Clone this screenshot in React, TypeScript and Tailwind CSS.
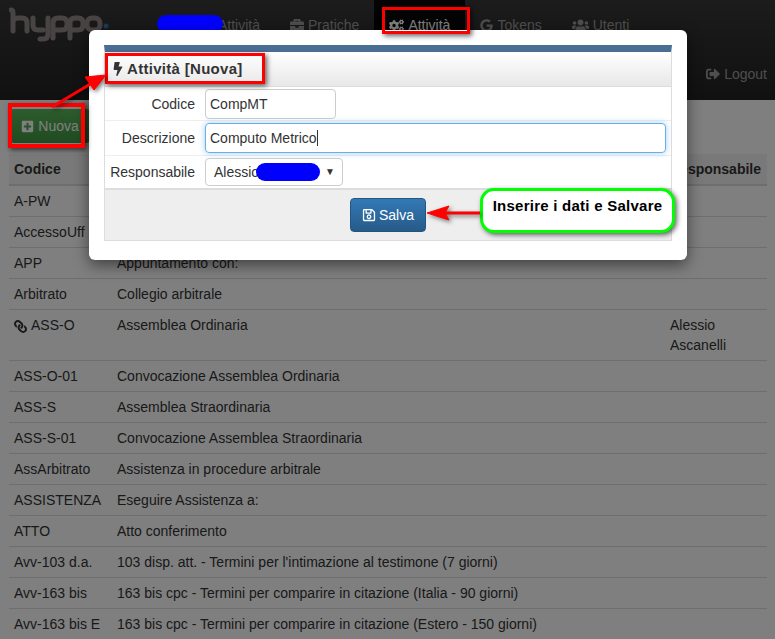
import React from 'react';
import { FaBolt, FaBriefcase, FaCogs, FaGoogle, FaLink, FaPlusSquare, FaRegSave, FaSignOutAlt, FaUsers } from 'react-icons/fa';

const ROWS: { code: string; desc?: string; owner?: string; linked?: boolean }[] = [
  { code: 'A-PW' },
  { code: 'AccessoUff' },
  { code: 'APP', desc: 'Appuntamento con:' },
  { code: 'Arbitrato', desc: 'Collegio arbitrale' },
  { code: 'ASS-O', desc: 'Assemblea Ordinaria', owner: 'Alessio Ascanelli', linked: true },
  { code: 'ASS-O-01', desc: 'Convocazione Assemblea Ordinaria' },
  { code: 'ASS-S', desc: 'Assemblea Straordinaria' },
  { code: 'ASS-S-01', desc: 'Convocazione Assemblea Straordinaria' },
  { code: 'AssArbitrato', desc: 'Assistenza in procedure arbitrale' },
  { code: 'ASSISTENZA', desc: 'Eseguire Assistenza a:' },
  { code: 'ATTO', desc: 'Atto conferimento' },
  { code: 'Avv-103 d.a.', desc: "103 disp. att. - Termini per l'intimazione al testimone (7 giorni)" },
  { code: 'Avv-163 bis', desc: '163 bis cpc - Termini per comparire in citazione (Italia - 90 giorni)' },
  { code: 'Avv-163 bis E', desc: '163 bis cpc - Termini per comparire in citazione (Estero - 150 giorni)' },
];

const NAV = [
  { label: 'Attività', icon: <FaBolt size={13} />, active: false },
  { label: 'Pratiche', icon: <FaBriefcase size={14} />, active: false },
  { label: 'Attività', icon: <FaCogs size={15} />, active: true },
  { label: 'Tokens', icon: <FaGoogle size={13} />, active: false },
  { label: 'Utenti', icon: <FaUsers size={17} />, active: false },
];

const App: React.FC = () => {
  return (
    <div className="relative h-[639px] w-[775px] overflow-hidden bg-white font-['Liberation_Sans',Arial,sans-serif] text-sm text-[#333]">
      <nav className="h-[100px] bg-gradient-to-b from-[#383838] to-[#222]">
        <div className="flex pl-[186px]">
          {NAV.map((item, i) => (
            <div key={i} className={`flex h-[50px] items-center gap-1 px-[15px] text-[#9d9d9d] ${item.active ? 'bg-[#080808] text-white' : ''}`}>
              {item.icon}
              <span>{item.label}</span>
            </div>
          ))}
        </div>
        <div className="flex h-[48px] items-center justify-end gap-1 pr-2 text-[#9d9d9d]">
          <FaSignOutAlt size={14} />
          <span>Logout</span>
        </div>
      </nav>

      <div className="px-[9px]">
        <div className="pb-[11px] pl-[1px] pt-[9px]">
          <button className="flex h-[34px] w-[80px] items-center justify-center gap-1 rounded bg-gradient-to-b from-[#5cb85c] to-[#419641] text-white">
            <FaPlusSquare size={13} />
            Nuova
          </button>
        </div>
        <table className="w-[758px] table-fixed border-collapse">
          <thead>
            <tr className="h-[31px] border-b-2 border-[#ddd] bg-[#f2f2f2] text-left">
              <th className="w-[103px] p-[5px]">Codice</th>
              <th className="w-[553px] p-[5px]"></th>
              <th className="p-[5px] whitespace-nowrap">Responsabile</th>
            </tr>
          </thead>
          <tbody>
            {ROWS.map(row => (
              <tr key={row.code} className="h-[31px] border-b border-[#ddd] align-top">
                <td className="p-[5px] whitespace-nowrap">
                  {row.linked && <FaLink size={13} className="mr-1 inline -scale-x-100" />}
                  {row.code}
                </td>
                <td className="p-[5px] whitespace-nowrap">{row.desc}</td>
                <td className="p-[5px]">{row.owner}</td>
              </tr>
            ))}
          </tbody>
        </table>
      </div>

      {/* backdrop */}
      <div className="absolute inset-0 bg-black/50" />

      {/* logo */}
      <svg className="absolute left-[9px] top-[7px]" width="104" height="36" viewBox="0 0 104 36" fill="none" stroke="#484444" strokeWidth="5" strokeLinecap="round">
        <path d="M2 3q2 0 2 3v18M4 15q0-4 5-4h4q5 0 5 5v8" />
        <path d="M24 11v7q0 5 5 5h5M39 11v16q0 5-5 5h-3" />
        <path d="M44 31V16q0-5 5-5h4q5 0 5 5v2q0 5-5 5h-6" />
        <path d="M61 31V16q0-5 5-5h3q5 0 5 5v2q0 5-5 5h-5" />
        <rect x="78" y="11" width="13" height="12" rx="5" />
        <circle cx="97" cy="19" r="2.5" fill="#1f3a5a" stroke="none" />
      </svg>

      {/* scribble over the first menu item */}
      <div className="absolute left-[157px] top-[15px] h-[18px] w-[66px] rounded-full bg-[#0000ff]" />

      {/* modal */}
      <div className="absolute left-[89px] top-[30px] h-[230px] w-[598px] rounded-md bg-white p-[15px] shadow-[0_5px_15px_rgba(0,0,0,0.5)]">
        <div className="border-x border-b border-[#ddd] border-t-[7px] border-t-[#4a6d94]">
          <div className="flex h-[34px] items-center gap-[2px] bg-gradient-to-b from-white to-[#e8e8e8] pl-[6px] text-[15px] font-bold tracking-[0.3px]">
            <FaBolt size={14} />
            Attività [Nuova]
          </div>
          <div className="flex h-[34px] items-center gap-[10px] border-t border-[#ddd]">
            <label className="w-[90px] text-right">Codice</label>
            <div className="flex h-[30px] w-[131px] items-center rounded border border-[#ccc] px-[4px]">CompMT</div>
          </div>
          <div className="flex h-[35px] items-center gap-[10px] border-t border-[#eee]">
            <label className="w-[90px] text-right">Descrizione</label>
            <div className="flex h-[30px] w-[461px] items-center rounded border border-[#66afe9] px-[4px] shadow-[0_0_6px_rgba(102,175,233,0.6)]">
              Computo Metrico<span className="h-4 w-px bg-[#333]" />
            </div>
          </div>
          <div className="flex h-[33px] items-center gap-[10px] border-t border-[#eee]">
            <label className="w-[90px] text-right">Responsabile</label>
            <div className="relative flex h-[28px] w-[138px] items-center justify-between rounded border border-[#ccc] pl-2 pr-[7px]">
              <span>Alessio</span>
              <span className="text-[10px]">▼</span>
              <div className="absolute left-[50px] top-[4px] h-[18px] w-[64px] rounded-full bg-[#0000ff]" />
            </div>
          </div>
          <div className="flex h-[52px] items-center border-t-2 border-[#ddd] bg-[#eee] pl-[245px]">
            <button className="flex h-[34px] w-[76px] items-center justify-center gap-[3px] rounded border border-[#245580] bg-gradient-to-b from-[#337ab7] to-[#265a88] text-white">
              <FaRegSave size={14} />
              Salva
            </button>
          </div>
        </div>
      </div>

      {/* annotations */}
      <div className="absolute left-[8px] top-[103px] h-[45px] w-[77px] border-4 border-[#ff0000] shadow-[2px_2px_5px_rgba(0,0,0,0.6)]" />
      <div className="absolute left-[105px] top-[53px] h-[31px] w-[160px] border-[3px] border-[#ff0000] shadow-[2px_2px_5px_rgba(0,0,0,0.6)]" />
      <div className="absolute left-[382px] top-[7px] h-[27px] w-[88px] border-[3px] border-[#ff0000] shadow-[2px_2px_5px_rgba(0,0,0,0.6)]" />
      <div className="absolute left-[480px] top-[188px] flex h-[45px] w-[195px] justify-center rounded-[14px] border-[3px] border-[#00ff00] bg-white pt-[4px] text-[15px] font-bold tracking-[0.25px] text-black shadow-[2px_2px_5px_rgba(0,0,0,0.6)]">
        Inserire i dati e Salvare
      </div>
      <svg className="absolute left-0 top-0 drop-shadow-[2px_2px_2px_rgba(0,0,0,0.5)]" width="775" height="639" fill="#ff0000" stroke="#ff0000">
        <path d="M52 107L92 83" strokeWidth="3" />
        <path d="M106 75L85 77L94 90Z" />
        <path d="M480 213H440" strokeWidth="3" />
        <path d="M427 213L449 206L445 213L449 220Z" />
      </svg>
    </div>
  );
};

export default App;
